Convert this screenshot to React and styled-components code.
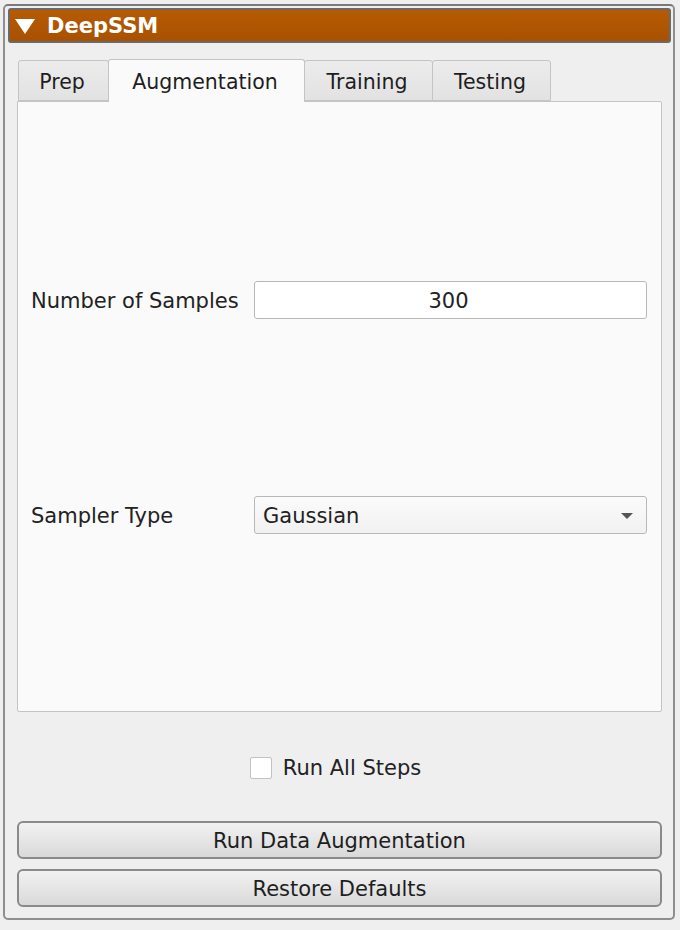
import React, { useState } from "react";
import styled, { createGlobalStyle } from "styled-components";

const GlobalStyle = createGlobalStyle`
  html, body {
    margin: 0;
    padding: 0;
    background: #efefef;
    font-family: "DejaVu Sans", "Liberation Sans", sans-serif;
  }
`;

const Page = styled.div`
  width: 680px;
  height: 930px;
  box-sizing: border-box;
  padding: 4px 5px 10px 3px;
  background: #efefef;
`;

const Panel = styled.div`
  height: 100%;
  box-sizing: border-box;
  border: 2px solid #8f8f8f;
  border-top-color: #7a7a7a;
  border-radius: 5px;
  padding: 2px 2px 10px 3px;
  display: flex;
  flex-direction: column;
`;

const Header = styled.div`
  height: 35px;
  flex-shrink: 0;
  box-sizing: border-box;
  display: flex;
  align-items: center;
  gap: 12px;
  padding-left: 5px;
  background: linear-gradient(#b65b04, #a85100);
  border: 2px solid #6a6a6a;
  border-radius: 3px;
  color: #ffffff;
  font-weight: bold;
  font-size: 21px;
`;

const Body = styled.div`
  flex: 1;
  display: flex;
  flex-direction: column;
  padding: 15px 9px 0 9px;
`;

const TabBar = styled.div`
  display: flex;
  align-items: flex-end;
  height: 43px;
  flex-shrink: 0;
  padding-left: 1px;
`;

const Tab = styled.div`
  box-sizing: border-box;
  width: ${(p) => p.w}px;
  height: ${(p) => (p.active ? 43 : 41)}px;
  display: flex;
  align-items: center;
  justify-content: center;
  padding-top: ${(p) => (p.active ? 1 : 3)}px;
  padding-right: 3px;
  font-size: 20.5px;
  color: #1e1e1e;
  background: ${(p) => (p.active ? "#fafafa" : "linear-gradient(#ececec, #e2e2e2)")};
  border: 1px solid #c4c4c4;
  border-bottom: ${(p) => (p.active ? "none" : "1px solid #c4c4c4")};
  border-radius: 3px 3px 0 0;
  margin-right: -1px;
  position: relative;
  z-index: ${(p) => (p.active ? 2 : 1)};
  margin-bottom: ${(p) => (p.active ? -1 : 0)}px;
`;

const Pane = styled.div`
  height: 611px;
  flex-shrink: 0;
  box-sizing: border-box;
  background: #fafafa;
  border: 1px solid #c4c4c4;
  border-radius: 0 2px 2px 2px;
  padding: 0 14px 0 13px;
  display: flex;
  flex-direction: column;
`;

const FieldRow = styled.div`
  display: flex;
  align-items: center;
  margin-top: ${(p) => p.top}px;
`;

const Label = styled.div`
  width: 223px;
  font-size: 21px;
  color: #222;
  white-space: nowrap;
  padding-top: 2px;
`;

const NumberBox = styled.div`
  flex: 1;
  height: 38px;
  box-sizing: border-box;
  border: 1px solid #b8b8b8;
  border-radius: 3px;
  background: #ffffff;
  display: flex;
  align-items: center;
  justify-content: center;
  padding: 2px 4px 0 0;
  font-size: 21px;
  color: #222;
`;

const Combo = styled.div`
  flex: 1;
  height: 38px;
  box-sizing: border-box;
  border: 1px solid #b8b8b8;
  border-radius: 3px;
  background: linear-gradient(#fbfbfb, #f1f1f1);
  display: flex;
  align-items: center;
  justify-content: space-between;
  padding: 2px 13px 0 8px;
  font-size: 21px;
  color: #222;
`;

const Arrow = styled.span`
  width: 0;
  height: 0;
  border-left: 6px solid transparent;
  border-right: 6px solid transparent;
  border-top: 6px solid #555;
`;

const CheckRow = styled.label`
  display: flex;
  align-items: center;
  justify-content: center;
  gap: 11px;
  margin-top: 42px;
  font-size: 21px;
  color: #222;
  padding-right: 8px;
  padding-top: 2px;
`;

const Box = styled.span`
  width: 22px;
  height: 22px;
  box-sizing: border-box;
  border: 1px solid #c2c2c2;
  background: #ffffff;
  border-radius: 2px;
`;

const Buttons = styled.div`
  display: flex;
  flex-direction: column;
  gap: 10px;
  margin-top: 41px;
`;

const Button = styled.div`
  height: 38px;
  box-sizing: border-box;
  border: 2px solid #8a8a8a;
  border-radius: 6px;
  background: linear-gradient(#f2f2f2, #d9d9d9);
  display: flex;
  align-items: center;
  justify-content: center;
  padding-top: 2px;
  font-size: 21px;
  color: #1e1e1e;
`;

const tabs = [
  { name: "Prep", w: 91 },
  { name: "Augmentation", w: 197 },
  { name: "Training", w: 129 },
  { name: "Testing", w: 119 },
];

export default function App() {
  const [active] = useState("Augmentation");
  return (
    <>
      <GlobalStyle />
      <Page>
        <Panel>
          <Header>
            <svg width="20" height="16" viewBox="0 0 20 16">
              <polygon points="0,1 20,1 10,16" fill="#ffffff" />
            </svg>
            DeepSSM
          </Header>
          <Body>
            <TabBar>
              {tabs.map((t) => (
                <Tab key={t.name} w={t.w} active={t.name === active}>
                  {t.name}
                </Tab>
              ))}
            </TabBar>
            <Pane>
              <FieldRow top={179}>
                <Label>Number of Samples</Label>
                <NumberBox>300</NumberBox>
              </FieldRow>
              <FieldRow top={177}>
                <Label>Sampler Type</Label>
                <Combo>
                  Gaussian
                  <Arrow />
                </Combo>
              </FieldRow>
            </Pane>
            <CheckRow>
              <Box />
              Run All Steps
            </CheckRow>
            <Buttons>
              <Button>Run Data Augmentation</Button>
              <Button>Restore Defaults</Button>
            </Buttons>
          </Body>
        </Panel>
      </Page>
    </>
  );
}
